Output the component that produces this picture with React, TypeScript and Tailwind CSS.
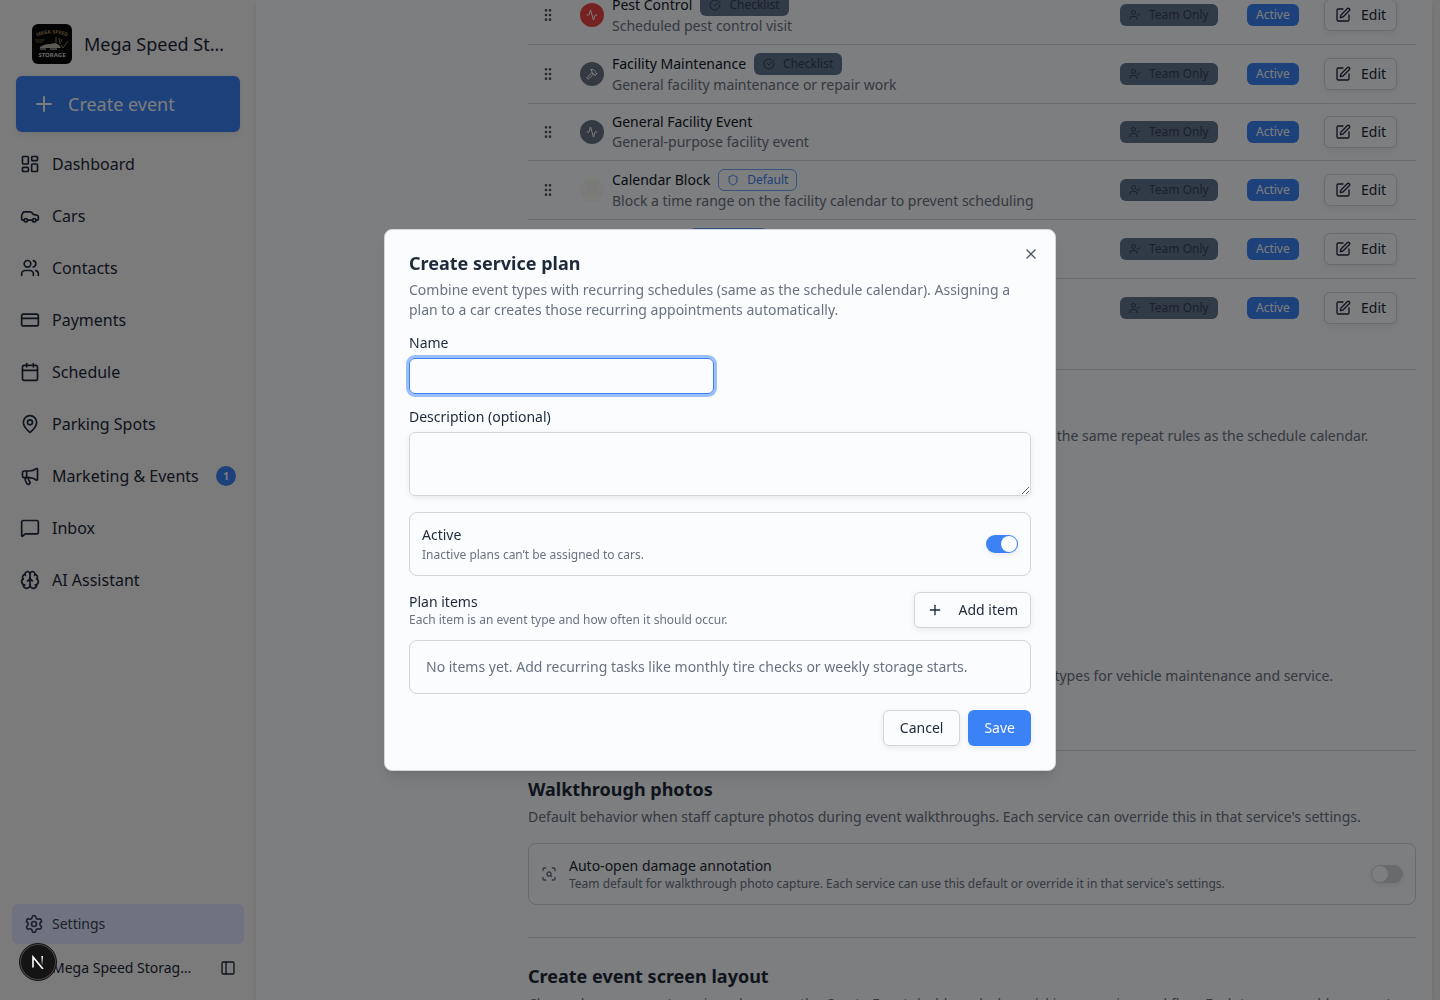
import {
  Activity,
  Brain,
  Calendar,
  CalendarX,
  Car,
  CircleCheckBig,
  CreditCard,
  GripVertical,
  Hammer,
  LayoutDashboard,
  MapPin,
  Megaphone,
  MessageSquare,
  PanelLeft,
  Plus,
  ScanSearch,
  Settings,
  Shield,
  SquarePen,
  UserCheck,
  Users,
  X,
} from "lucide-react"

const navItems = [
  { label: "Dashboard", icon: LayoutDashboard },
  { label: "Cars", icon: Car },
  { label: "Contacts", icon: Users },
  { label: "Payments", icon: CreditCard },
  { label: "Schedule", icon: Calendar },
  { label: "Parking Spots", icon: MapPin },
  { label: "Marketing & Events", icon: Megaphone, count: 1 },
  { label: "Inbox", icon: MessageSquare },
  { label: "AI Assistant", icon: Brain },
]

const services = [
  {
    name: "Pest Control",
    description: "Scheduled pest control visit",
    badge: "checklist",
    icon: Activity,
    color: "bg-[#ef4444] text-white",
  },
  {
    name: "Facility Maintenance",
    description: "General facility maintenance or repair work",
    badge: "checklist",
    icon: Hammer,
    color: "bg-gray-500 text-white",
  },
  {
    name: "General Facility Event",
    description: "General-purpose facility event",
    badge: "",
    icon: Activity,
    color: "bg-gray-500 text-white",
  },
  {
    name: "Calendar Block",
    description: "Block a time range on the facility calendar to prevent scheduling",
    badge: "default",
    icon: CalendarX,
    color: "bg-[#f7f6f5] text-[#f3f1ef]",
  },
  {
    name: "Staff Block",
    description: "Block staff time",
    badge: "default",
    icon: Activity,
    color: "bg-gray-500 text-white",
  },
  {
    name: "Facility Tour",
    description: "Walk the facility",
    badge: "default",
    icon: Activity,
    color: "bg-gray-500 text-white",
  },
]

const badgeBase = "inline-flex h-[22px] items-center gap-2 rounded-md border px-2 text-xs"
const outlineButton =
  "inline-flex items-center rounded-md border border-gray-300 bg-[#fafcfe] text-sm text-gray-800 shadow-[0_2px_6px_rgb(0_0_0/0.08)]"
const switchBase =
  "relative h-[18px] w-8 shrink-0 appearance-none rounded-full shadow-[0_2px_6px_rgb(0_0_0/0.08)] before:absolute before:top-px before:size-4 before:rounded-full before:bg-[#fafcfe]"

function BrandLogo() {
  return (
    <svg viewBox="0 0 40 40" className="size-10 shrink-0 rounded-md" aria-hidden="true">
      <rect width="40" height="40" fill="#080808" />
      <path id="brand-arc" d="M2 14 Q20 5 38 14" fill="none" />
      <text fontSize="5" fontWeight="700" fill="#a3875a" fontFamily="Noto Sans, sans-serif">
        <textPath href="#brand-arc" startOffset="50%" textAnchor="middle">
          MEGA SPEED
        </textPath>
      </text>
      <path d="M3 16h10M4 18h7" stroke="#6b5637" strokeWidth="1" />
      <path d="M8 23c3-2 6-3 10-3l5-1 4 2 2 3H8z" fill="#b9b5ab" />
      <path d="M8 25h6M18 25h7" stroke="#e5e5e5" strokeWidth="1" />
      <path d="M24 13v7M27 14l1 6M30 15l-1 3M29 21l2 3 5-7" fill="none" stroke="#8d7a58" strokeWidth="1" />
      <text
        x="20"
        y="33"
        textAnchor="middle"
        fontSize="6"
        fontWeight="700"
        fill="#d6d3cb"
        fontFamily="Noto Sans, sans-serif"
      >
        STORAGE
      </text>
    </svg>
  )
}

function Sidebar() {
  return (
    <aside className="flex w-64 shrink-0 flex-col bg-[#f6f6f6] text-gray-800">
      <div className="flex flex-col gap-3 px-4 pt-6">
        <div className="flex items-center gap-3 px-4">
          <BrandLogo />
          <span className="truncate text-lg">Mega Speed Storage</span>
        </div>
        <button className="flex h-14 items-center gap-3 rounded-md bg-[#3b82f6] px-4 text-lg text-gray-50 shadow-[0_2px_6px_rgb(0_0_0/0.08)]">
          <Plus className="size-6" />
          Create event
        </button>
      </div>

      <nav className="flex flex-1 flex-col gap-3 p-3">
        {navItems.map(({ label, icon: Icon, count }) => (
          <a key={label} href="#" className="flex h-10 items-center gap-3 rounded-md px-2">
            <Icon className="size-5 shrink-0" />
            <span className="flex-1">{label}</span>
            {count && (
              <span className="flex size-5 items-center justify-center rounded-full bg-[#3b82f6] text-[10px] font-bold text-gray-50">
                {count}
              </span>
            )}
          </a>
        ))}
      </nav>

      <div className="flex flex-col gap-1 p-3 text-sm">
        <a href="#" className="flex h-10 items-center gap-2 rounded-md bg-indigo-100 px-3 text-gray-700">
          <Settings className="size-5" />
          Settings
        </a>
        <div className="flex h-10 items-center gap-7 pr-2 pl-10">
          <span className="flex-1 truncate">Mega Speed Storage Team</span>
          <button aria-label="Toggle sidebar">
            <PanelLeft className="size-4" />
          </button>
        </div>
      </div>
    </aside>
  )
}

function ServiceTable() {
  return (
    <table className="w-full table-fixed text-left text-sm">
      <colgroup>
        <col className="w-11" />
        <col />
        <col className="w-[127px]" />
        <col className="w-[77px]" />
        <col className="w-[100px]" />
      </colgroup>
      <tbody>
        {services.map(({ name, description, badge, icon: Icon, color }) => (
          <tr key={name} className="border-b border-gray-300 last:border-b-0">
            <td className="py-2 pl-3">
              <GripVertical className="size-4 text-gray-600" />
            </td>
            <td className="px-2 py-2">
              <div className="flex items-center gap-2">
                <span className={`flex size-6 shrink-0 items-center justify-center rounded-full ${color}`}>
                  <Icon className="size-3" />
                </span>
                <div>
                  <div className="flex items-center gap-2 text-gray-900">
                    {name}
                    {badge === "checklist" && (
                      <span className={`${badgeBase} border-transparent bg-slate-500 text-gray-700`}>
                        <CircleCheckBig className="size-3" />
                        Checklist
                      </span>
                    )}
                    {badge === "default" && (
                      <span className={`${badgeBase} border-[#3b82f6]/70 text-[#3b82f6]`}>
                        <Shield className="size-3" />
                        Default
                      </span>
                    )}
                  </div>
                  <div className="text-gray-500">{description}</div>
                </div>
              </div>
            </td>
            <td className="px-2">
              <span className={`${badgeBase} border-transparent bg-slate-500 align-middle text-gray-700`}>
                <UserCheck className="size-3" />
                Team Only
              </span>
            </td>
            <td className="px-2">
              <span className={`${badgeBase} border-transparent bg-[#3b82f6] align-middle text-gray-50`}>Active</span>
            </td>
            <td className="px-2">
              <button className={`${outlineButton} h-8 gap-2.5 px-2.5 align-middle`}>
                <SquarePen className="size-4" />
                Edit
              </button>
            </td>
          </tr>
        ))}
      </tbody>
    </table>
  )
}

function SectionHeading({ title, description }: { title: string; description: string }) {
  return (
    <div className="flex flex-col gap-1">
      <h2 className="text-lg font-bold text-gray-800">{title}</h2>
      <p className="text-sm text-gray-500">{description}</p>
    </div>
  )
}

function SettingsContent() {
  return (
    <div className="-mt-3.5 ml-64 flex flex-col">
      <section className="pb-8">
        <ServiceTable />
      </section>

      <section className="flex flex-col border-t border-gray-300 pt-6 pb-16">
        <SectionHeading
          title="Service plans"
          description="Reusable bundles of event types you can assign to a car. Recurring events follow the same repeat rules as the schedule calendar."
        />
        <div className="h-[188px]" />
        <SectionHeading
          title="Service catalog"
          description="Turn on the built-in defaults or add your own custom services. Manage all event types for vehicle maintenance and service."
        />
      </section>

      <section className="flex flex-col gap-4 border-t border-gray-300 pt-6 pb-8">
        <SectionHeading
          title="Walkthrough photos"
          description="Default behavior when staff capture photos during event walkthroughs. Each service can override this in that service's settings."
        />
        <div className="flex items-center gap-3 rounded-lg border border-gray-300 p-3">
          <ScanSearch className="size-4 text-gray-500" />
          <div className="flex-1">
            <label htmlFor="auto-open" className="block text-sm text-gray-800">
              Auto-open damage annotation
            </label>
            <p className="text-xs text-gray-500">
              Team default for walkthrough photo capture. Each service can use this default or override it in that
              service's settings.
            </p>
          </div>
          <input
            id="auto-open"
            type="checkbox"
            role="switch"
            className={`${switchBase} bg-gray-300 before:left-px`}
          />
        </div>
      </section>

      <section className="border-t border-gray-300 pt-6">
        <SectionHeading
          title="Create event screen layout"
          description="Choose how you want services shown on the Create Event dashboard when picking a service workflow. Each team can add more sets."
        />
      </section>
    </div>
  )
}

function CreatePlanDialog() {
  return (
    <div className="fixed inset-0 z-40 flex items-center justify-center bg-black/50">
      <div
        role="dialog"
        aria-modal="true"
        aria-labelledby="plan-title"
        className="relative flex w-full max-w-2xl flex-col gap-4 rounded-lg border border-gray-300 bg-[#fafcfe] p-6 text-sm text-gray-800 shadow-lg"
      >
        <button aria-label="Close" className="absolute top-4 right-4 text-gray-600">
          <X className="size-4" />
        </button>

        <div className="flex flex-col gap-2">
          <h2 id="plan-title" className="text-lg leading-none font-bold">
            Create service plan
          </h2>
          <p className="text-gray-500">
            Combine event types with recurring schedules (same as the schedule calendar). Assigning a plan to a car
            creates those recurring appointments automatically.
          </p>
        </div>

        <div className="grid grid-cols-2 gap-3">
          <div className="flex flex-col gap-2">
            <label htmlFor="plan-name" className="leading-none">
              Name
            </label>
            <input
              id="plan-name"
              type="text"
              className="h-9 w-full rounded-md border border-[#3b82f6] px-3 ring-[3px] ring-[#3b82f6]/50 outline-none"
            />
          </div>
        </div>

        <div className="flex flex-col gap-2">
          <label htmlFor="plan-description" className="leading-none">
            Description (optional)
          </label>
          <textarea
            id="plan-description"
            className="h-16 w-full rounded-md border border-gray-300 px-3 py-2 shadow-[0_2px_6px_rgb(0_0_0/0.08)] outline-none"
          />
        </div>

        <div className="flex items-center justify-between rounded-lg border border-gray-300 p-3">
          <div className="flex flex-col gap-0.5">
            <label htmlFor="plan-active">Active</label>
            <p className="text-xs text-gray-500">Inactive plans can’t be assigned to cars.</p>
          </div>
          <input
            id="plan-active"
            type="checkbox"
            role="switch"
            defaultChecked
            className={`${switchBase} bg-[#3b82f6] before:right-px`}
          />
        </div>

        <div className="flex flex-col gap-3">
          <div className="flex items-center justify-between">
            <div>
              <h3>Plan items</h3>
              <p className="text-xs text-gray-500">Each item is an event type and how often it should occur.</p>
            </div>
            <button className={`${outlineButton} h-9 gap-4 px-3`}>
              <Plus className="size-4" />
              Add item
            </button>
          </div>
          <p className="rounded-lg border border-gray-300 p-4 text-gray-500">
            No items yet. Add recurring tasks like monthly tire checks or weekly storage starts.
          </p>
        </div>

        <div className="flex justify-end gap-2">
          <button className={`${outlineButton} h-9 px-4`}>Cancel</button>
          <button className="h-9 rounded-md bg-[#3b82f6] px-4 text-gray-50 shadow-[0_2px_6px_rgb(0_0_0/0.08)]">
            Save
          </button>
        </div>
      </div>
    </div>
  )
}

function DevIndicator() {
  return (
    <button
      aria-label="Open dev tools"
      className="fixed bottom-5 left-5 z-50 flex size-9 items-center justify-center rounded-full bg-[#141414] ring-1 ring-[#4a4a4a] ring-inset outline-1 outline-[#111]"
    >
      <svg viewBox="0 0 12 14" className="h-3.5 w-3" fill="none" strokeWidth="1.6" aria-hidden="true">
        <defs>
          <linearGradient id="dev-fade" x1="0" y1="0" x2="0" y2="1">
            <stop offset="0" stopColor="#fff" />
            <stop offset="1" stopColor="#fff" stopOpacity="0.1" />
          </linearGradient>
        </defs>
        <polyline points="1,12.5 1,2 11,14" stroke="#fff" />
        <rect x="9.4" y="1" width="1.6" height="9" fill="url(#dev-fade)" />
      </svg>
    </button>
  )
}

export default function App() {
  return (
    <div className="flex h-screen overflow-hidden bg-[#f1f1f1] font-['Noto_Sans',sans-serif]">
      <Sidebar />
      <main className="mr-2 min-w-0 flex-1 overflow-hidden bg-[#fafcfe] px-4 shadow-md">
        <SettingsContent />
      </main>
      <CreatePlanDialog />
      <DevIndicator />
    </div>
  )
}
